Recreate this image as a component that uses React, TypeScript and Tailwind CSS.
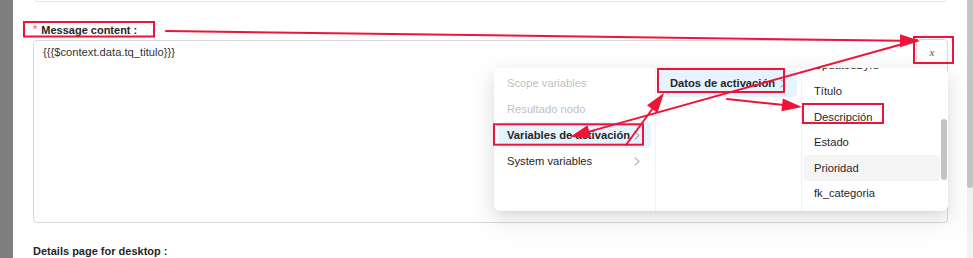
import React from "react";

const RED = "#ee1438";

function Arrow({ x0, y0, x1, y1, L = 20, W = 6.5 }: { x0: number; y0: number; x1: number; y1: number; L?: number; W?: number }) {
  const dx = x1 - x0;
  const dy = y1 - y0;
  const len = Math.hypot(dx, dy);
  const ux = dx / len;
  const uy = dy / len;
  const bx = x1 - ux * L;
  const by = y1 - uy * L;
  const px = -uy;
  const py = ux;
  const pts = `${x1},${y1} ${bx + px * W},${by + py * W} ${bx - px * W},${by - py * W}`;
  return (
    <g>
      <line x1={x0} y1={y0} x2={bx + ux * 2} y2={by + uy * 2} stroke={RED} strokeWidth={2} strokeLinecap="round" />
      <polygon points={pts} fill={RED} />
    </g>
  );
}

function Chevron() {
  return (
    <svg width="6" height="9" viewBox="0 0 6 9" className="shrink-0">
      <polyline points="0.6,0.6 5.2,4.5 0.6,8.4" fill="none" stroke="#8c8c8c" strokeWidth="1" />
    </svg>
  );
}

export default function App() {
  return (
    <div className="relative w-[973px] h-[258px] overflow-hidden bg-white flex font-['Liberation_Sans',Arial,sans-serif]">
      {/* left gray strip */}
      <div className="w-[13px] h-full bg-[#7f7f7f] shrink-0" />

      {/* main content */}
      <div className="relative flex-1 flex flex-col pl-[20px]">
        {/* previous card edge */}
        <div className="ml-[2px] w-[911px] h-[2px] border-x border-b border-[#e2e2e2] rounded-b-[4px]" />

        {/* label */}
        <div className="mt-[22px] h-[13px] flex items-center text-[11px] leading-[13px] font-bold text-[#262626]">
          <span className="text-[#ff4d4f] font-normal mr-[4px] relative top-[-1px]">*</span>
          <span>Message content :</span>
        </div>

        {/* textarea */}
        <div className="relative mt-[3px] w-[915px] h-[183px] border border-[#d9d9d9] rounded-[4px] pt-[2px] pl-[9px] text-[11.2px] leading-[18px] text-[#333]">
          {"{{{$context.data.tq_titulo}}}"}
          <div className="absolute top-[-2px] right-[-1px] w-[32px] h-[25px] border border-[#d9d9d9] rounded-[4px] bg-white flex items-center justify-center">
            <span className="font-['Liberation_Serif',serif] italic text-[11px] text-[#4a5568]">x</span>
          </div>
        </div>

        {/* next label */}
        <div className="mt-[22px] h-[13px] text-[11px] leading-[13px] font-bold text-[#262626]">Details page for desktop :</div>
      </div>

      {/* page scrollbar */}
      <div className="w-[6px] h-full shrink-0 flex flex-col bg-[#f1f1f1]">
        <div className="h-[188px] bg-[#c4c4c4] rounded-b-[3px]" />
      </div>

      {/* cascader dropdown */}
      <div className="absolute left-[494px] top-[68px] w-[454px] h-[143px] bg-white rounded-[6px] flex overflow-hidden text-[11.2px] shadow-[0_6px_16px_0_rgba(0,0,0,0.08),0_3px_6px_-4px_rgba(0,0,0,0.12),0_9px_28px_8px_rgba(0,0,0,0.05)]">
        {/* col 1 */}
        <div className="w-[162px] h-full border-r border-[#f0f0f0] pt-[2px] px-[4px] flex flex-col">
          <div className="h-[26px] flex items-center pl-[9px] text-[#bfbfbf]">Scope variables</div>
          <div className="h-[26px] flex items-center pl-[9px] text-[#bfbfbf]">Resultado nodo</div>
          <div className="h-[26px] flex items-center justify-between pl-[9px] pr-[11px] bg-[#e6f4ff] rounded-[4px] font-bold text-[#262626]">
            <span>Variables de activación</span>
            <Chevron />
          </div>
          <div className="h-[26px] flex items-center justify-between pl-[9px] pr-[11px] text-[#262626]">
            <span>System variables</span>
            <Chevron />
          </div>
        </div>
        {/* col 2 */}
        <div className="w-[146px] h-full border-r border-[#f0f0f0] pt-[2px] px-[4px] flex flex-col">
          <div className="h-[27px] flex items-center justify-between pl-[10px] pr-[11px] bg-[#e6f4ff] rounded-[4px] font-bold text-[#262626]">
            <span>Datos de activación</span>
            <Chevron />
          </div>
        </div>
        {/* col 3 */}
        <div className="relative flex-1 h-full overflow-hidden pl-[2px] pr-[8px]">
          <div className="mt-[-15px] flex flex-col text-[#262626]">
            <div className="h-[25.6px] flex items-center pl-[10px]">UpdatedById</div>
            <div className="h-[25.6px] flex items-center pl-[10px]">Título</div>
            <div className="h-[25.6px] flex items-center pl-[10px]">Descripción</div>
            <div className="h-[25.6px] flex items-center pl-[10px]">Estado</div>
            <div className="h-[25.6px] flex items-center pl-[10px] bg-[#f5f5f5] rounded-[4px]">Prioridad</div>
            <div className="h-[25.6px] flex items-center pl-[10px]">fk_categoria</div>
          </div>
          <div className="absolute right-[1px] top-[51px] w-[6px] h-[61px] rounded-full bg-[#c4c4c4]" />
        </div>
      </div>

      {/* annotations */}
      <svg className="absolute inset-0 pointer-events-none" width="973" height="258" viewBox="0 0 973 258">
        <rect x="24" y="22" width="130" height="14.5" fill="none" stroke={RED} strokeWidth="2" />
        <rect x="914" y="37" width="39" height="26" fill="none" stroke={RED} strokeWidth="2" />
        <rect x="494" y="124.3" width="149" height="20.4" fill="none" stroke={RED} strokeWidth="2" />
        <rect x="658" y="69" width="126" height="23" fill="none" stroke={RED} strokeWidth="2" />
        <rect x="803" y="104" width="80" height="19" fill="none" stroke={RED} strokeWidth="2" />
        <Arrow x0={166} y0={31} x1={920} y1={41} />
        <Arrow x0={917} y0={40} x1={570} y1={137} />
        <Arrow x0={626} y0={145} x1={664} y1={93} />
        <Arrow x0={727} y0={99} x1={802} y1={107} />
      </svg>
    </div>
  );
}
